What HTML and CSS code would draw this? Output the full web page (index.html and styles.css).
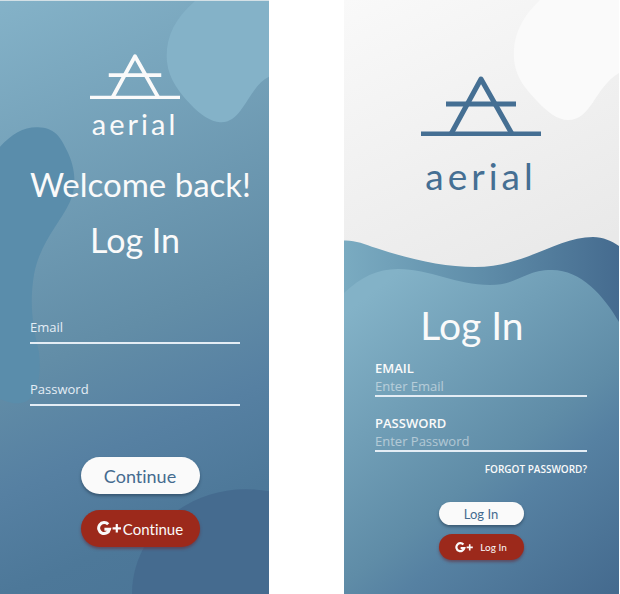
FILE: index.html
```html
<!DOCTYPE html>
<html lang="en">
<head>
<meta charset="utf-8">
<meta name="viewport" content="width=device-width, initial-scale=1">
<title>aerial – Log In</title>
<link rel="stylesheet" href="styles.css">
</head>
<body>
<svg class="defs" aria-hidden="true">
  <defs>
    <symbol id="mark" viewBox="0 0 120 60">
      <path d="M0 58H120M25 28H95" fill="none" stroke="currentColor" stroke-width="5"/>
      <path d="M30 58L60 3L91 58" fill="none" stroke="currentColor" stroke-width="5" stroke-linejoin="round"/>
    </symbol>
    <symbol id="gplus" viewBox="0 0 24 15">
      <path d="M11.200 3.300A5.500 5.500 0 1 0 12.500 8.300H7.400" fill="none" stroke="currentColor" stroke-width="3"/>
      <path d="M15.600 7.300H24M19.800 3.100V11.500" fill="none" stroke="currentColor" stroke-width="2.200"/>
    </symbol>
  </defs>
</svg>
<div class="screens">
  <main class="screen welcome">
    <svg class="backdrop" viewBox="0 0 269 594" preserveAspectRatio="none" aria-hidden="true">
      <path fill="#84b2c8" d="M195 0C173 19 165 39 167 61C169 79 180 92 190 103C200 114 211 121 220 121.500C243 123 248 86 269 76V0Z"/>
      <path fill="#5a8dab" d="M0 146C12 133 24 126 38 126.500C54 127 60 135 67 150C74 164 78 183 70 201C59 224 40 242 34 274C29 304 33 327 39 352C42 380 36 403 18 403C10 403 7 401 0 399Z"/>
      <path fill="#456b8f" d="M132 594C132 535 185 489 245 489Q257 489 269 491V594Z"/>
    </svg>
    <header class="brand">
      <svg class="mark" aria-hidden="true"><use href="#mark"/></svg>
      <span class="wordmark">aerial</span>
    </header>
    <h1 class="heading greeting">Welcome back!</h1>
    <h2 class="heading">Log In</h2>
    <form class="form">
      <div class="field">
        <label for="w-email">Email</label>
        <input id="w-email" type="email">
      </div>
      <div class="field">
        <label for="w-password">Password</label>
        <input id="w-password" type="password">
      </div>
      <div class="actions">
        <button class="button" type="submit">Continue</button>
        <button class="button google" type="button"><svg class="gplus" aria-hidden="true"><use href="#gplus"/></svg>Continue</button>
      </div>
    </form>
  </main>
  <section class="screen login">
    <svg class="backdrop" viewBox="0 0 275 594" preserveAspectRatio="none" aria-hidden="true">
      <defs>
        <linearGradient id="wave-back">
          <stop offset="0" stop-color="#7aabc1"/>
          <stop offset=".5" stop-color="#5f8da9"/>
          <stop offset="1" stop-color="#456b8f"/>
        </linearGradient>
        <linearGradient id="wave-front" gradientUnits="userSpaceOnUse" x1="30" y1="290" x2="270" y2="590">
          <stop offset="0" stop-color="#83b2c7"/>
          <stop offset=".55" stop-color="#5f8ca7"/>
          <stop offset=".66" stop-color="#5681a2"/>
          <stop offset="1" stop-color="#456b8f"/>
        </linearGradient>
      </defs>
      <path fill="#fafafa" d="M196 0C177 18 169 36 170 58C171 78 183 90 193 101C203 112 214 120 224 120C248 120 250 88 275 73V0Z"/>
      <path fill="url(#wave-back)" d="M0 240.500C11 240 20 244 32 248C65 259 99 267 131 267C181 267 213 237 249 237C259 237 268 241 275 246V594H0Z"/>
      <path fill="url(#wave-front)" d="M0 293C17 277 33 269 54 269C86 269 112 285 146 285C174 285 180 270 208 270C237 270 260 296 275 322V594H0Z"/>
    </svg>
    <header class="brand">
      <svg class="mark" aria-hidden="true"><use href="#mark"/></svg>
      <span class="wordmark">aerial</span>
    </header>
    <h2 class="heading">Log In</h2>
    <form class="form">
      <div class="field">
        <label for="l-email">EMAIL</label>
        <input id="l-email" type="email" placeholder="Enter Email">
      </div>
      <div class="field">
        <label for="l-password">PASSWORD</label>
        <input id="l-password" type="password" placeholder="Enter Password">
      </div>
      <a class="forgot" href="#forgot">FORGOT PASSWORD?</a>
      <div class="actions">
        <button class="button" type="submit">Log In</button>
        <button class="button google" type="button"><svg class="gplus" aria-hidden="true"><use href="#gplus"/></svg>Log In</button>
      </div>
    </form>
  </section>
</div>
</body>
</html>
```
FILE: styles.css
```css
* {
  box-sizing: border-box;
}

body {
  margin: 0;
  background: #fff;
  color: #fafafa;
  font-family: "Open Sans", sans-serif;
}

.defs {
  position: absolute;
  width: 0;
  height: 0;
}

.screens {
  display: grid;
  grid-template-columns: 269fr 275fr;
  column-gap: 75px;
  min-height: 100vh;
  padding-right: 1px;
}

.screen {
  position: relative;
  isolation: isolate;
  display: flex;
  flex-direction: column;
  align-items: center;
  overflow: hidden;
}

.backdrop {
  position: absolute;
  inset: 0;
  z-index: -1;
  width: 100%;
  height: 100%;
}

.brand {
  display: flex;
  flex-direction: column;
  align-items: center;
}

.wordmark,
.heading,
.button {
  font-family: Lato, sans-serif;
  font-variant-ligatures: none;
}

.heading {
  margin: 0;
  font-weight: 400;
  white-space: nowrap;
}

.form {
  display: flex;
  flex-direction: column;
  width: 100%;
}

.field {
  display: grid;
}

.field input {
  width: 100%;
  min-width: 0;
  padding: 0;
  border: 0;
  border-bottom: 2px solid #e4edf5;
  border-radius: 0;
  outline: 0;
  background: transparent;
  color: #fafafa;
  font: 13px/16px "Open Sans", sans-serif;
}

.actions {
  display: flex;
  flex-direction: column;
  align-items: center;
}

.button {
  display: flex;
  align-items: center;
  justify-content: center;
  padding: 0;
  border: 0;
  border-radius: 20px;
  background: #fafafa;
  box-shadow: 0 2px 3px rgb(30 50 70 / 50%);
  color: #456b8f;
  cursor: pointer;
}

.google {
  background: #9c291b;
  box-shadow: 0 2px 3px rgb(100 45 60 / 60%);
  color: #fafafa;
}

/* Welcome screen */

.welcome {
  padding: 53px 29px 0 30px;
  border-top: 1px solid #d3e0e6;
  background: linear-gradient(157deg, #84b2c8 0%, #628da7 54%, #5680a2 70%, #4d7899 84%, #4a7496 100%);
}

.welcome .mark {
  width: 90px;
  height: 45px;
}

.welcome .wordmark {
  margin-top: 7px;
  font-size: 29px;
  line-height: 36px;
  letter-spacing: 3px;
}

.welcome .heading {
  margin-top: 16px;
  font-size: 34px;
  line-height: 40px;
}

.welcome .greeting {
  align-self: flex-start;
  margin-top: 22px;
  font-size: 33px;
}

.welcome .form {
  padding-top: 58px;
}

.welcome .field {
  height: 26px;
}

.welcome .field + .field {
  margin-top: 36px;
}

.welcome .field > * {
  grid-area: 1 / 1;
}

.welcome label {
  color: #e4edf5;
  font-size: 13px;
  line-height: 18px;
}

.welcome .actions {
  gap: 16px;
  padding: 51px 0 0 10px;
}

.welcome .button {
  width: 119px;
  height: 37px;
  font-size: 18px;
}

.welcome .google {
  font-size: 15px;
  gap: 2px;
}

.welcome .gplus {
  width: 24px;
  height: 15px;
}

/* Log in screen */

.login {
  padding: 76px 32px 0 31px;
  background: linear-gradient(155deg, #f9f9f9, #e9e9e9 50%);
}

.login .mark {
  width: 120px;
  height: 60px;
}

.login .brand {
  color: #456f93;
}

.login .wordmark {
  margin-top: 17px;
  font-size: 37px;
  line-height: 46px;
  letter-spacing: 4px;
}

.login .heading {
  margin: 103px 18px 0 0;
  font-size: 39px;
  line-height: 46px;
}

.login .form {
  padding-top: 11px;
}

.login .field + .field {
  margin-top: 17px;
}

.login label {
  font-size: 13px;
  font-weight: 600;
  line-height: 18px;
}

.login .field input {
  height: 20px;
}

.login input::placeholder {
  color: #fafafa;
  opacity: 0.5;
}

.forgot {
  align-self: flex-end;
  margin-top: 10px;
  color: #fafafa;
  font-size: 10px;
  font-weight: 600;
  line-height: 14px;
  text-decoration: none;
}

.login .actions {
  gap: 9px;
  padding-top: 26px;
}

.login .button {
  width: 85px;
  height: 23px;
  font-size: 13px;
}

.login .google {
  height: 26px;
  font-size: 10px;
  gap: 7px;
}

.login .gplus {
  width: 18px;
  height: 11px;
}
```
